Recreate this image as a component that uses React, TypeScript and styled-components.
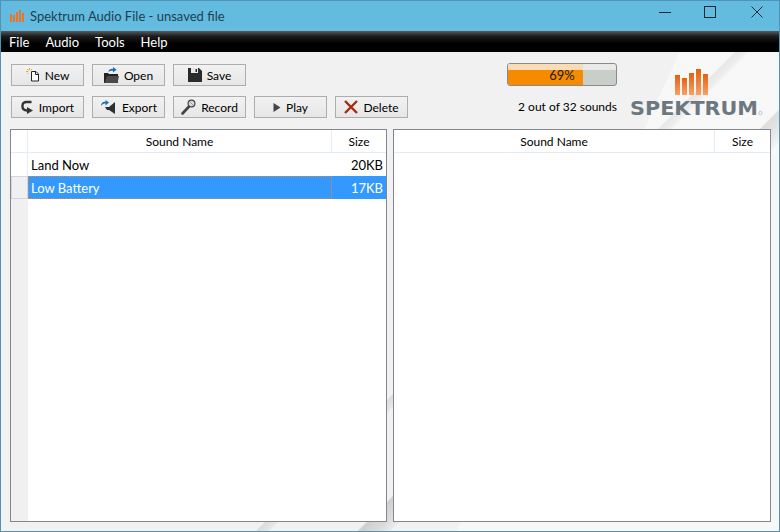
import styled, { createGlobalStyle } from 'styled-components';

const GlobalStyle = createGlobalStyle`
  html, body {
    margin: 0;
    padding: 0;
    background: #f5f5f5;
  }
  * {
    box-sizing: border-box;
  }
`;

// Barras del logo: x, y (arriba) y ancho
const logoBars = [
  { x: 45, y: 7, w: 5 },
  { x: 52, y: 10, w: 5 },
  { x: 59, y: 5, w: 5 },
  { x: 66, y: 1, w: 5 },
  { x: 73, y: 6, w: 5 },
];

const LogoMark = () => (
  <LogoSvg width="134" height="52" viewBox="0 0 134 52">
    <defs>
      <linearGradient id="bar" x1="0" y1="0" x2="0" y2="1">
        <stop offset="0" stopColor="#e5600c" />
        <stop offset="1" stopColor="#f6a266" />
      </linearGradient>
    </defs>
    {logoBars.map((b) => (
      <rect key={b.x} x={b.x} y={b.y} width={b.w} height={27 - b.y} fill="url(#bar)" />
    ))}
    <text
      x="0"
      y="47"
      fontFamily="'DejaVu Sans', sans-serif"
      fontWeight="700"
      fontSize="20"
      fill="#6c7880"
      textLength="128"
      lengthAdjust="spacingAndGlyphs"
    >
      SPEKTRUM
    </text>
    <circle cx="130.5" cy="45" r="1.7" fill="none" stroke="#a9b0b5" strokeWidth="0.7" />
  </LogoSvg>
);

const TitleIcon = () => (
  <svg width="15" height="12" viewBox="0 0 15 12">
    <rect x="0" y="4" width="2" height="8" fill="#e9752a" />
    <rect x="3" y="5" width="2" height="7" fill="#e9752a" />
    <rect x="6" y="2" width="2" height="10" fill="#e9752a" />
    <rect x="9" y="0" width="2" height="12" fill="#e9752a" />
    <rect x="12" y="3" width="2" height="9" fill="#e9752a" />
  </svg>
);

const NewIcon = () => (
  <svg width="14" height="14" viewBox="0 0 14 14">
    <path d="M5.5 3.5h4.5l2.5 2.5v7h-7z" fill="#fff" stroke="#222" strokeWidth="1" />
    <path d="M9.5 3.5v3h3" fill="none" stroke="#222" strokeWidth="1" />
    <path d="M3.5 0v2.2M0 3.5h2.2M1 1l1.4 1.4M6 1L4.8 2.2M1 6l1.3-1.2" stroke="#eda63c" strokeWidth="1" />
  </svg>
);

const OpenIcon = () => (
  <svg width="15" height="16" viewBox="0 0 15 16">
    <path d="M0 6h4l1 1h9v9H0z" fill="#222" />
    <path d="M3 9h12l-1.5 7H0.5z" fill="#4a4a4a" />
    <path d="M4.5 5c0-2.5 2-3.5 4.5-3.2V0l3.6 2.8L9 5.5V3.8C7 3.6 5.7 4 4.5 5z" fill="#1f6fc0" />
  </svg>
);

const SaveIcon = () => (
  <svg width="14" height="14" viewBox="0 0 14 14">
    <path d="M0 0h11l3 3v11H0z" fill="#2b2b2b" />
    <rect x="3" y="0" width="7" height="5" fill="#e8e8e8" />
    <rect x="7.5" y="1" width="1.5" height="3" fill="#2b2b2b" />
  </svg>
);

const ImportIcon = () => (
  <svg width="13" height="14" viewBox="0 0 13 14">
    <path d="M10.5 2H5.5C3 2 1.5 3.5 1.5 5.5v1C1.5 9 3 10.5 6 10.5" fill="none" stroke="#333" strokeWidth="2.4" />
    <path d="M6 7l6 3.5L6 14z" fill="#333" />
  </svg>
);

const ExportIcon = () => (
  <svg width="17" height="16" viewBox="0 0 17 16">
    <path d="M5 8h4l6-5v12l-6-4H7z" fill="#2f2f2f" />
    <path d="M1 7c0-3 2-4.5 4.5-4.2V1L9 3.6 5.5 6.4V4.6C3.6 4.4 2.2 5.3 1 7z" fill="#1f6fc0" />
  </svg>
);

const RecordIcon = () => (
  <svg width="15" height="16" viewBox="0 0 15 16">
    <path d="M9 6.5L1.5 14.5" stroke="#444" strokeWidth="2.6" strokeLinecap="round" />
    <circle cx="10.5" cy="4.5" r="3.4" fill="#ddd" stroke="#444" strokeWidth="1.2" />
    <path d="M8.5 2.5l4 4" stroke="#888" strokeWidth="0.8" />
  </svg>
);

const PlayIcon = () => (
  <svg width="8" height="9" viewBox="0 0 8 9">
    <path d="M0.5 0L7.5 4.5L0.5 9z" fill="#444" />
  </svg>
);

const DeleteIcon = () => (
  <svg width="14" height="14" viewBox="0 0 14 14">
    <path d="M1 1l12 12M13 1L1 13" stroke="#a62a14" strokeWidth="2.4" />
  </svg>
);

const toolbarButtons = [
  { label: 'New', icon: <NewIcon /> },
  { label: 'Open', icon: <OpenIcon /> },
  { label: 'Save', icon: <SaveIcon /> },
  null,
  null,
  { label: 'Import', icon: <ImportIcon /> },
  { label: 'Export', icon: <ExportIcon /> },
  { label: 'Record', icon: <RecordIcon /> },
  { label: 'Play', icon: <PlayIcon /> },
  { label: 'Delete', icon: <DeleteIcon /> },
];

const sounds = [
  { name: 'Land Now', size: '20KB', selected: false },
  { name: 'Low Battery', size: '17KB', selected: true },
];

const App = () => {
  return (
    <Window>
      <GlobalStyle />
      <TitleBar>
        <TitleIcon />
        <TitleText>Spektrum Audio File - unsaved file</TitleText>
        <WindowControls>
          <WindowControl>
            <svg width="12" height="12" viewBox="0 0 12 12">
              <path d="M0 6.5h12" stroke="#1a2a33" strokeWidth="1" />
            </svg>
          </WindowControl>
          <WindowControl>
            <svg width="12" height="12" viewBox="0 0 12 12">
              <rect x="0.5" y="0.5" width="11" height="11" fill="none" stroke="#1a2a33" strokeWidth="1" />
            </svg>
          </WindowControl>
          <WindowControl>
            <svg width="12" height="12" viewBox="0 0 12 12">
              <path d="M0.5 0.5l11 11M11.5 0.5l-11 11" stroke="#1a2a33" strokeWidth="1" />
            </svg>
          </WindowControl>
        </WindowControls>
      </TitleBar>

      <MenuBar>
        <MenuItem>File</MenuItem>
        <MenuItem>Audio</MenuItem>
        <MenuItem>Tools</MenuItem>
        <MenuItem>Help</MenuItem>
      </MenuBar>

      <Content>
        <Toolbar>
          <ButtonGrid>
            {toolbarButtons.map((b, i) =>
              b ? (
                <ToolButton key={b.label}>
                  {b.icon}
                  <span>{b.label}</span>
                </ToolButton>
              ) : (
                <span key={i} />
              ),
            )}
          </ButtonGrid>
          <Status>
            <Progress>
              <ProgressFill $value={69} />
              <ProgressLabel>69%</ProgressLabel>
            </Progress>
            <SoundCount>2 out of 32 sounds</SoundCount>
          </Status>
          <LogoMark />
        </Toolbar>

        <Tables>
          <Panel>
            <HeaderRow $gutter>
              <HeaderCell />
              <HeaderCell>Sound Name</HeaderCell>
              <HeaderCell>Size</HeaderCell>
            </HeaderRow>
            <PanelBody>
              <Gutter>
                {sounds.map((s) => (
                  <GutterCell key={s.name} $selected={s.selected} />
                ))}
              </Gutter>
              <Rows>
                {sounds.map((s) => (
                  <Row key={s.name} $selected={s.selected}>
                    <NameCell $selected={s.selected}>{s.name}</NameCell>
                    <SizeCell>{s.size}</SizeCell>
                  </Row>
                ))}
              </Rows>
            </PanelBody>
          </Panel>

          <Panel>
            <HeaderRow>
              <HeaderCell>Sound Name</HeaderCell>
              <HeaderCell>Size</HeaderCell>
            </HeaderRow>
          </Panel>
        </Tables>
      </Content>
    </Window>
  );
};

const Window = styled.div`
  width: 780px;
  height: 532px;
  display: flex;
  flex-direction: column;
  border: 1px solid #4f93b5;
  font-family: Lato, sans-serif;
  font-size: 12px;
  color: #000;
  overflow: hidden;
`;

const TitleBar = styled.div`
  height: 30px;
  flex: none;
  display: flex;
  align-items: center;
  padding-left: 9px;
  background: #63bbe0;
`;

const TitleText = styled.span`
  margin-left: 5px;
  color: #1d3f50;
  font-size: 13px;
`;

const WindowControls = styled.div`
  margin-left: auto;
  display: flex;
  align-self: flex-start;
`;

const WindowControl = styled.div`
  width: 44px;
  height: 22px;
  display: flex;
  align-items: center;
  justify-content: center;

  &:nth-child(2) {
    margin: 0 3px 0 1px;
  }
`;

const MenuBar = styled.div`
  height: 21px;
  flex: none;
  display: flex;
  align-items: center;
  padding-left: 8px;
  gap: 16px;
  background: linear-gradient(#5a5a5a 0%, #1c1c1c 25%, #000 60%);
`;

const MenuItem = styled.span`
  color: #fff;
  font-size: 13px;
`;

const Content = styled.div`
  flex: 1;
  min-height: 0;
  display: flex;
  flex-direction: column;
  padding: 12px 8px 9px 9px;
  background:
    linear-gradient(115deg, rgba(0, 0, 0, 0.015) 0 67.8%, rgba(255, 255, 255, 0.25) 67.8%),
    linear-gradient(
      135deg,
      #f5f5f5 0 58.3%,
      #dfdfdf 58.5%,
      #ececec 59.4%,
      #f5f5f5 59.5%,
      #f5f5f5 66.4%,
      #d2d2d2 66.6%,
      #dedede 68%,
      #eeeeee 69%,
      #f5f5f5 69.2%,
      #f5f5f5 100%
    );
`;

const Toolbar = styled.div`
  display: flex;
  align-items: flex-start;
  height: 54px;
  padding-left: 1px;
`;

const ButtonGrid = styled.div`
  display: grid;
  grid-template-columns: repeat(5, 73px);
  grid-template-rows: 22px 22px;
  column-gap: 8px;
  row-gap: 10px;
`;

const ToolButton = styled.button`
  display: flex;
  align-items: center;
  justify-content: center;
  gap: 5px;
  padding: 0;
  border: 1px solid #adadad;
  background: linear-gradient(#f2f2f2, #e6e6e6);
  font-family: inherit;
  font-size: 12px;
  color: #000;
`;

const Status = styled.div`
  margin-left: 99px;
  width: 110px;
  height: 54px;
  display: flex;
  flex-direction: column;
  align-items: flex-end;
  margin-top: -1px;
`;

const Progress = styled.div`
  position: relative;
  width: 110px;
  height: 23px;
  border: 1px solid #8a8a8a;
  border-radius: 3px;
  background: linear-gradient(#e9e9e9 0 6px, #c8cec8 6px);
  overflow: hidden;
`;

const ProgressFill = styled.div<{ $value: number }>`
  width: ${(p) => p.$value}%;
  height: 100%;
  background: linear-gradient(#fbdcb8 0 6px, #f68b00 6px);
`;

const ProgressLabel = styled.span`
  position: absolute;
  inset: 0;
  display: flex;
  align-items: center;
  justify-content: center;
  color: #1a1a1a;
  font-size: 13px;
`;

const SoundCount = styled.span`
  margin-top: 13px;
  white-space: nowrap;
`;

const LogoSvg = styled.svg`
  margin-left: 13px;
  margin-top: 4px;
  flex: none;
`;

const Tables = styled.div`
  flex: 1;
  min-height: 0;
  margin-top: 11px;
  display: grid;
  grid-template-columns: 377px 378px;
  column-gap: 6px;
`;

const Panel = styled.div`
  display: flex;
  flex-direction: column;
  background: #fff;
  border: 1px solid #82878f;
`;

const HeaderRow = styled.div<{ $gutter?: boolean }>`
  height: 23px;
  flex: none;
  display: grid;
  grid-template-columns: ${(p) => (p.$gutter ? '17px 304px 1fr' : '321px 1fr')};
  border-bottom: 1px solid #e3ecf3;
`;

const HeaderCell = styled.div`
  display: flex;
  align-items: center;
  justify-content: center;
  border-right: 1px solid #e3ecf3;

  &:last-child {
    border-right: none;
  }
`;

const PanelBody = styled.div`
  flex: 1;
  min-height: 0;
  display: flex;
`;

const Gutter = styled.div`
  width: 17px;
  flex: none;
  background: #f0f0f0;
`;

const GutterCell = styled.div<{ $selected: boolean }>`
  height: 23px;
  background: ${(p) => (p.$selected ? '#f0f0f0' : '#fff')};
  border-right: 1px solid #e3ecf3;
  border: ${(p) => (p.$selected ? '1px solid #cfd8e0' : undefined)};
`;

const Rows = styled.div`
  flex: 1;
  min-width: 0;
  font-size: 13px;
`;

const Row = styled.div<{ $selected: boolean }>`
  height: 23px;
  display: grid;
  grid-template-columns: 304px 1fr;
  background: ${(p) => (p.$selected ? '#3399ff' : '#fff')};
  color: ${(p) => (p.$selected ? '#fff' : '#000')};
`;

const NameCell = styled.div<{ $selected: boolean }>`
  display: flex;
  align-items: center;
  padding-left: ${(p) => (p.$selected ? '2px' : '3px')};
  border: ${(p) => (p.$selected ? '1px dotted #d98a3c' : 'none')};
`;

const SizeCell = styled.div`
  display: flex;
  align-items: center;
  justify-content: flex-end;
  padding-right: 3px;
`;

export default App;
